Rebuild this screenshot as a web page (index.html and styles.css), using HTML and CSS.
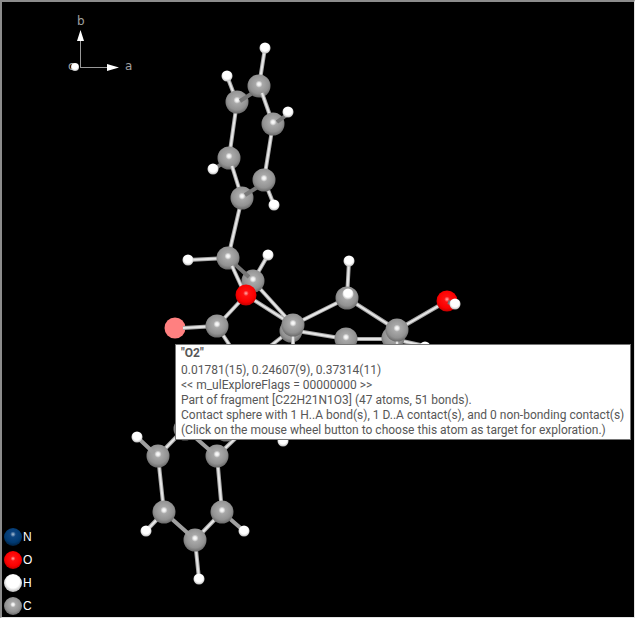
FILE: index.html
```
<!DOCTYPE html>
<html lang="en">
<head>
    <meta charset="UTF-8">
    <meta name="viewport" content="width=device-width, initial-scale=1.0">
    <title>Structure Viewer</title>

    <link rel="stylesheet" href="styles.css">

</head>

<body>

    <main class="viewer">

        <svg class="scene" viewBox="2 2 632 615" role="img" aria-label="Ball and stick model">
            <defs>
                <radialGradient id="carbon" cx="0.5" cy="0.42" r="0.6">
                    <stop offset="0" stop-color="#fff"/>
                    <stop offset="0.12" stop-color="#ececec"/>
                    <stop offset="0.26" stop-color="#a8a8a8"/>
                    <stop offset="0.7" stop-color="#929292"/>
                    <stop offset="1" stop-color="#646464"/>
                </radialGradient>
                <radialGradient id="oxygen" cx="0.5" cy="0.42" r="0.6">
                    <stop offset="0" stop-color="#ffb0b0"/>
                    <stop offset="0.22" stop-color="#ff1010"/>
                    <stop offset="0.7" stop-color="#fa0000"/>
                    <stop offset="1" stop-color="#b80000"/>
                </radialGradient>
                <radialGradient id="hydrogen" cx="0.5" cy="0.42" r="0.6">
                    <stop offset="0.6" stop-color="#fff"/>
                    <stop offset="1" stop-color="#b4b4b4"/>
                </radialGradient>
                <radialGradient id="nitrogen" cx="0.5" cy="0.35" r="0.65">
                    <stop offset="0" stop-color="#b0c4d8"/>
                    <stop offset="0.24" stop-color="#0c4480"/>
                    <stop offset="0.7" stop-color="#003a72"/>
                    <stop offset="1" stop-color="#002040"/>
                </radialGradient>
                <circle id="C" r="11.5" fill="url(#carbon)"/>
                <circle id="O" r="10.5" fill="url(#oxygen)"/>
                <circle id="H" r="5.5" fill="url(#hydrogen)"/>
            </defs>

            <!-- axes -->
            <g class="axes">
                <path class="axis" d="M80.500 67.500V40M80 67.500H108"/>
                <path class="arrow" d="M80.500 30L84 41H77zM119 67.500L107 64V71z"/>
                <text x="77" y="25">b</text>
                <text x="125" y="70">a</text>
                <text x="68" y="70">c</text>
                <circle cx="75" cy="67" r="4" fill="url(#hydrogen)"/>
            </g>

            <!-- bonds behind the atoms -->
            <g class="bond">
                <path d="M265 48L259 86M227 76L237 102M237 102L229 158M273 124L264 180M264 180L274 205M242 198L228 258"/>
                <path d="M188 260L228 258M268 255L253 281M253 281L293 325M246 295L293 325M246 295L217 326M217 326L240 361M291 330L260 354"/>
            </g>
            <g class="bond-core">
                <path d="M265 48L259 86M227 76L237 102M237 102L229 158M273 124L264 180M264 180L274 205M242 198L228 258"/>
                <path d="M188 260L228 258M268 255L253 281M253 281L293 325M246 295L293 325M246 295L217 326M217 326L240 361M291 330L260 354"/>
            </g>
            <g class="bond">
                <path d="M349 261L347 298M347 298L293 325M347 298L397 330M397 330L447 301M291 330L346 339M346 339L393 339M393 339L425 346"/>
                <path d="M185 428L158 456M217 456L240 434M158 456L164 512M217 456L222 512M222 512L195 540M195 540L199 579M164 512L146 531"/>
            </g>
            <g class="bond-core">
                <path d="M349 261L347 298M347 298L293 325M347 298L397 330M397 330L447 301M291 330L346 339M346 339L393 339M393 339L425 346"/>
                <path d="M185 428L158 456M217 456L240 434M158 456L164 512M217 456L222 512M222 512L195 540M195 540L199 579M164 512L146 531"/>
            </g>

            <!-- upper ring -->
            <use href="#C" x="237" y="102"/>
            <path class="bond dark" d="M240 101L259 89"/>
            <use href="#C" x="259" y="86"/>
            <path class="bond" d="M262 93L273 124"/>
            <path class="bond-core" d="M262 93L273 124"/>
            <use href="#C" x="273" y="124"/>
            <path class="bond dark" d="M277 122L288 114"/>
            <path class="bond dark" d="M229 158L216 168"/>
            <use href="#C" x="229" y="158"/>
            <path class="bond" d="M232 166L242 198"/>
            <path class="bond-core" d="M232 166L242 198"/>
            <use href="#C" x="242" y="198"/>
            <path class="bond dark" d="M245 195L264 183"/>
            <use href="#C" x="264" y="180"/>
            <use href="#H" x="265" y="48"/>
            <use href="#H" x="227" y="76"/>
            <use href="#H" x="288" y="112"/>
            <use href="#H" x="213" y="169"/>
            <use href="#H" x="274" y="205"/>

            <!-- lactone ring -->
            <use href="#C" x="253" y="281"/>
            <path class="bond dark" d="M228 258L249 277"/>
            <use href="#C" x="228" y="258"/>
            <path class="bond" d="M232 266L244 292"/>
            <path class="bond-core" d="M232 266L244 292"/>
            <use href="#O" x="246" y="295"/>
            <circle class="picked" cx="175" cy="328" r="10.5"/>
            <path class="bond" d="M183 328L217 326"/>
            <path class="bond-core" d="M183 328L217 326"/>
            <use href="#C" x="217" y="326"/>
            <use href="#H" x="188" y="260"/>
            <use href="#H" x="268" y="255"/>

            <!-- right side rings -->
            <use href="#C" x="291" y="331"/>
            <path class="bond" d="M293 330V360"/>
            <path class="bond-core" d="M293 330V360"/>
            <use href="#C" x="293" y="325"/>
            <use href="#C" x="347" y="298"/>
            <use href="#C" x="346" y="339"/>
            <use href="#C" x="393" y="338"/>
            <path class="bond" d="M397 334V360"/>
            <path class="bond-core" d="M397 334V360"/>
            <use href="#C" x="397" y="330"/>
            <use href="#O" x="447" y="301"/>
            <path class="bond dark" d="M448 302L454 304"/>
            <use href="#H" x="455" y="304"/>
            <use href="#H" x="349" y="261"/>
            <use href="#H" x="348" y="294"/>
            <use href="#H" x="425" y="347"/>

            <!-- lower ring -->
            <use href="#C" x="185" y="429"/>
            <use href="#C" x="226" y="430"/>
            <use href="#C" x="158" y="456"/>
            <use href="#C" x="217" y="456"/>
            <path class="bond mid" d="M137 437L154 453M190 433L213 453"/>
            <use href="#C" x="195" y="540"/>
            <path class="bond mid" d="M164 512L191 536M222 512L244 531"/>
            <use href="#C" x="164" y="512"/>
            <use href="#C" x="222" y="512"/>
            <use href="#H" x="137" y="437"/>
            <use href="#H" x="146" y="531"/>
            <use href="#H" x="244" y="531"/>
            <use href="#H" x="199" y="579"/>
            <use href="#H" x="283" y="441"/>
        </svg>

        <ul class="legend">
            <li><svg class="ball" viewBox="0 0 18 18"><circle cx="9" cy="9" r="9" fill="url(#nitrogen)"/></svg>N</li>
            <li><svg class="ball" viewBox="0 0 18 18"><circle cx="9" cy="9" r="9" fill="url(#oxygen)"/></svg>O</li>
            <li><svg class="ball" viewBox="0 0 18 18"><circle cx="9" cy="9" r="9" fill="url(#hydrogen)"/></svg>H</li>
            <li><svg class="ball" viewBox="0 0 18 18"><circle cx="9" cy="9" r="9" fill="url(#carbon)"/></svg>C</li>
        </ul>

        <div class="tooltip" role="tooltip">
            <strong>"O2"</strong>
            <p>0.01781(15), 0.24607(9), 0.37314(11)</p>
            <p>&lt;&lt; m_ulExploreFlags = 00000000 &gt;&gt;</p>
            <p>Part of fragment [C22H21N1O3] (47 atoms, 51 bonds).</p>
            <p>Contact sphere with 1 H..A bond(s), 1 D..A contact(s), and 0 non-bonding contact(s)</p>
            <p>(Click on the mouse wheel button to choose this atom as target for exploration.)</p>
        </div>

    </main>

</body>

</html>
```
FILE: styles.css
```
* {
    box-sizing: border-box;
    margin: 0;
    padding: 0;
}

body {
    background: #000;
}

.viewer {
    position: relative;
    height: 100vh;
    overflow: hidden;
    background: #000;
    border: 2px solid #8c8c8c;
    border-right: 1px solid #e3e3e3;
    border-bottom: 1px solid #e3e3e3;
}

.scene {
    display: block;
    width: 100%;
    height: 100%;
}

.axes text {
    font: 12px "DejaVu Sans", sans-serif;
    fill: #a0a0a0;
}

.axis {
    stroke: #999;
    fill: none;
}

.arrow {
    fill: #fff;
}

.bond {
    stroke: #a8a8a8;
    stroke-width: 4;
    fill: none;
}

.bond-core {
    stroke: #e6e6e6;
    stroke-width: 2;
    fill: none;
}

.dark {
    stroke: #777;
}

.mid {
    stroke: #a0a0a0;
}

.picked {
    fill: #ff8080;
}

.legend {
    position: absolute;
    left: 2px;
    bottom: 0;
    list-style: none;
    font: 12px "Liberation Sans", Arial, sans-serif;
    color: #fff;
}

.legend li {
    display: flex;
    align-items: center;
    gap: 1px;
    height: 23px;
}

.ball {
    width: 18px;
    height: 18px;
}

.tooltip {
    position: absolute;
    left: 173px;
    top: 342px;
    padding: 1px 6px 1px 5px;
    border: 1px solid #767676;
    background: #fff;
    color: #575757;
    font: 12px/15px Roboto, "Open Sans", sans-serif;
    white-space: nowrap;
}

.tooltip strong {
    display: block;
    margin-bottom: 2px;
}
```
